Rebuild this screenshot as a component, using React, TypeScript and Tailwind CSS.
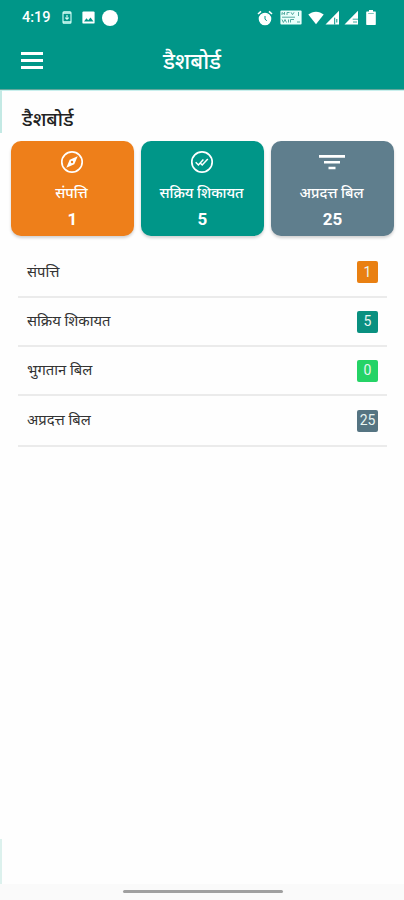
import React from 'react'

const cards = [
  { label: 'संपत्ति', value: 1, bg: 'bg-[#ee7f1a]', icon: <CompassIcon /> },
  { label: 'सक्रिय शिकायत', value: 5, bg: 'bg-[#009688]', icon: <DoneAllIcon /> },
  { label: 'अप्रदत्त बिल', value: 25, bg: 'bg-[#5f7e8d]', icon: <FilterIcon /> },
]

const rows = [
  { label: 'संपत्ति', value: 1, bg: 'bg-[#e98012]', height: 'h-[50px]' },
  { label: 'सक्रिय शिकायत', value: 5, bg: 'bg-[#0a9080]', height: 'h-[49px]' },
  { label: 'भुगतान बिल', value: 0, bg: 'bg-[#25d366]', height: 'h-[49px]' },
  { label: 'अप्रदत्त बिल', value: 25, bg: 'bg-[#557482]', height: 'h-[51px]' },
]

function CompassIcon() {
  return (
    <svg className="mr-px" width="24" height="24" viewBox="0 0 24 24" fill="none">
      <circle cx="12" cy="12" r="10.2" stroke="white" strokeWidth="1.7" />
      <path d="M17.7 6.3 14.3 14.3 6.3 17.7 9.7 9.7Z" fill="white" />
      <circle cx="12" cy="12" r="1.2" fill="#ee7f1a" />
    </svg>
  )
}

function DoneAllIcon() {
  return (
    <svg className="mr-px" width="24" height="24" viewBox="0 0 24 24" fill="none" stroke="white">
      <circle cx="12" cy="12" r="10.2" strokeWidth="1.7" />
      <path d="m5.7 12.3 2.7 2.7 5-5.5M10.5 13.3l1.7 1.7 5.6-6" strokeWidth="1.5" />
    </svg>
  )
}

function FilterIcon() {
  return (
    <svg className="mr-px" width="26" height="24" viewBox="0 0 26 24" fill="white">
      <path d="M0 5h26v2.8H0zM5 11h16v2.6H5zM9.5 16.8h7v2.4h-7z" />
    </svg>
  )
}

function StatusBar() {
  return (
    <div className="flex h-[35px] items-center justify-between pl-[22px] pr-[28px] text-white">
      <div className="flex items-center">
        <span className="w-[40px] pt-[2px] text-[14.5px] font-medium leading-none">4:19</span>
        <svg width="10" height="13" viewBox="0 0 10 13" fill="none" stroke="#d8fff7">
          <rect x="1" y=".7" width="8" height="11.6" rx="1" strokeWidth="1.1" />
          <path d="M1 2h8M1 11h8" strokeWidth="1.3" />
          <path d="M5 4v4M3.3 6.6 5 8.3l1.7-1.7" strokeWidth="1.1" />
        </svg>
        <svg className="ml-[10px]" width="13" height="13" viewBox="0 0 13 13">
          <rect x=".4" y=".4" width="12.2" height="12.2" rx="1.2" fill="white" />
          <path d="m2 10.5 2.5-3.2 1.7 2L8.5 6.4l3 4.1z" fill="#009688" />
        </svg>
        <span className="ml-[7px] h-4 w-4 rounded-full bg-white" />
      </div>
      <div className="flex items-center">
        <svg width="16" height="16" viewBox="0 0 16 16" fill="none" stroke="white">
          <circle cx="8" cy="9" r="5.6" fill="white" strokeWidth="1.4" />
          <path d="m1 4 3-2.7M15 4l-3-2.7" strokeWidth="1.6" />
          <path d="M8 6v3.2l1.8 1.5" stroke="#009688" strokeWidth="1" />
        </svg>
        <svg className="ml-[7px]" width="22" height="15" viewBox="0 0 22 15">
          <rect x=".4" y=".4" width="21.2" height="14.2" rx="1" fill="#eafffb" />
          <path d="M2 5V2.5l2.5 2V2M7 5V2.5h2.5M11 2.3l1.5 2.4L14 2.3M18.5 2v4M2 9.5l1.4 3L5 9.5l1.5 3M8.5 12.5v-3M10.5 9.5H14M10.5 12.5v-3M17 12h3M2 7.2h13" stroke="#53aaa0" strokeWidth="1" fill="none" />
        </svg>
        <svg className="ml-[6px]" width="16" height="14" viewBox="0 0 16 14">
          <path d="M.3 3.6C4.7-.3 11.3-.3 15.7 3.6L8 13.3z" fill="white" />
        </svg>
        <svg className="ml-px" width="15" height="15" viewBox="0 0 15 15">
          <path d="M.5 14.5 14 .7v13.8z" fill="white" />
          <path d="M9.7 14.5V7.7M11.8 9v3.5" fill="none" stroke="#009688" strokeWidth="1" />
        </svg>
        <svg className="ml-[4px]" width="15" height="15" viewBox="0 0 15 15">
          <path d="M.5 14.5 14 .7v13.8z" fill="white" />
          <path d="M8.7 9.2H14M9 12h4" fill="none" stroke="#3aaa9e" strokeWidth="1" />
        </svg>
        <svg className="ml-[7px]" width="10" height="15" viewBox="0 0 10 15">
          <path d="M3 0h4v1.6h2.3q.5 0 .5.6v12q0 .7-.6.7H.8q-.6 0-.6-.7v-12q0-.6.6-.6H3z" fill="white" />
          <path d="M2.2 3.5h5.6" stroke="#80c8c0" strokeWidth="1" />
        </svg>
      </div>
    </div>
  )
}

function App() {
  return (
    <div className="flex h-[900px] w-[404px] flex-col overflow-hidden bg-[#fefefe] font-['Roboto','Noto_Sans','Noto_Sans_Devanagari',sans-serif]">
      <header className="h-[90px] shrink-0 border-b border-[#63a79c] bg-[#009688]">
        <StatusBar />
        <div className="grid h-[50px] grid-cols-[22px_298px] items-center pl-[21px]">
          <div className="flex flex-col gap-[4px]">
            <span className="h-[3px] bg-white" />
            <span className="h-[3px] bg-white" />
            <span className="h-[3px] bg-white" />
          </div>
          <h1 className="pt-[3px] text-center text-[22px] leading-none font-medium text-white">डैशबोर्ड</h1>
        </div>
      </header>

      <main className="relative flex grow flex-col">
        <span className="absolute left-0 top-0 h-[43px] w-[2px] bg-[#c3e9e4]" />
        <span className="absolute bottom-0 left-0 h-[45px] w-[2px] bg-[#dcf1ed]" />

        <h2 className="h-[51px] border-t border-[#c8efed] pl-[22px] pt-[17px] text-[19.5px] leading-[24px] font-medium text-[#222]">डैशबोर्ड</h2>

        <div className="grid grid-cols-3 gap-[7px] pl-[11px] pr-[10px]">
          {cards.map((card) => (
            <div key={card.label} className={`flex h-[95px] flex-col items-center rounded-[10px] pt-[9px] text-white shadow-[0_2px_3px_rgba(0,0,0,0.18)] ${card.bg}`}>
              {card.icon}
              <p className="mt-[10px] h-[20px] whitespace-nowrap pr-[2px] text-[14.5px] leading-[20px] font-medium">{card.label}</p>
              <p className="mt-[5px] text-[17px] leading-[20px] font-bold">{card.value}</p>
            </div>
          ))}
        </div>

        <ul className="mt-[12px] pl-[18px] pr-[17px]">
          {rows.map((row) => (
            <li key={row.label} className={`flex items-center justify-between border-b-2 border-[#ebebeb] px-[9px] text-[14.8px] text-[#333] ${row.height}`}>
              <span>{row.label}</span>
              <span className={`flex h-[22px] w-[21px] items-center justify-center rounded-[2px] text-[14px] text-[#e9f5f2] ${row.bg}`}>{row.value}</span>
            </li>
          ))}
        </ul>
      </main>

      <footer className="flex h-4 shrink-0 justify-center bg-[#fafafa] pl-px pt-[6px]">
        <span className="h-[3px] w-[160px] rounded-full bg-[#a0a0a0]" />
      </footer>
    </div>
  )
}

export default App
